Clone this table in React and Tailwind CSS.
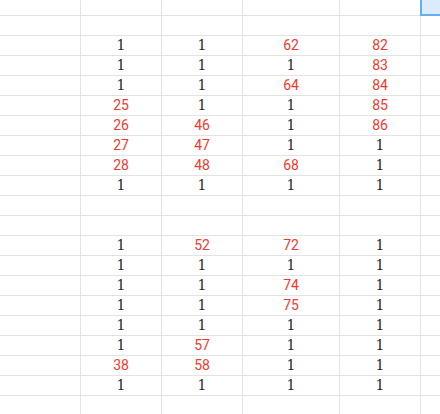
import React from 'react';

// rows of values; 0 = plain black "1", number = red value, null = empty row
const rows = [
    null,
    [0, 0, 62, 82],
    [0, 0, 0, 83],
    [0, 0, 64, 84],
    [25, 0, 0, 85],
    [26, 46, 0, 86],
    [27, 47, 0, 0],
    [28, 48, 68, 0],
    [0, 0, 0, 0],
    null,
    null,
    [0, 52, 72, 0],
    [0, 0, 0, 0],
    [0, 0, 74, 0],
    [0, 0, 75, 0],
    [0, 0, 0, 0],
    [0, 57, 0, 0],
    [38, 58, 0, 0],
    [0, 0, 0, 0],
    null,
];

const Cell = ({ value }) => {
    if (value === undefined || value === null) return <div className="border-r border-b border-[#e3e3e3]" />;
    if (value === 0) {
        return (
            <div className="border-r border-b border-[#e3e3e3] flex items-center justify-center text-[#262626] text-[14px] font-['DejaVu_Serif',serif]">
                1
            </div>
        );
    }
    return (
        <div className="border-r border-b border-[#e3e3e3] flex items-center justify-center text-[#f4392c] text-[14px] font-['Roboto',sans-serif]">
            {value}
        </div>
    );
};

export default function App() {
    return (
        <div className="w-[440px] h-[414px] overflow-hidden bg-white">
            <div className="grid grid-cols-[81px_81px_81px_97px_81px_1fr] grid-rows-[16px_repeat(20,20px)]">
                {/* top row with the selected cell on the right */}
                <div className="border-r border-b border-[#e3e3e3]" />
                <div className="border-r border-b border-[#e3e3e3]" />
                <div className="border-r border-b border-[#e3e3e3]" />
                <div className="border-r border-b border-[#e3e3e3]" />
                <div className="border-r border-b border-[#e3e3e3]" />
                <div className="relative border-b border-[#e3e3e3]">
                    <div className="absolute -left-px top-0 right-0 -bottom-px bg-[#dcebfb] border-l-2 border-b-2 border-[#62b0f3]" />
                </div>
                {rows.map((row, i) => (
                    <React.Fragment key={i}>
                        <Cell />
                        <Cell value={row ? row[0] : null} />
                        <Cell value={row ? row[1] : null} />
                        <Cell value={row ? row[2] : null} />
                        <Cell value={row ? row[3] : null} />
                        <div className="border-b border-[#e3e3e3]" />
                    </React.Fragment>
                ))}
            </div>
        </div>
    );
}
